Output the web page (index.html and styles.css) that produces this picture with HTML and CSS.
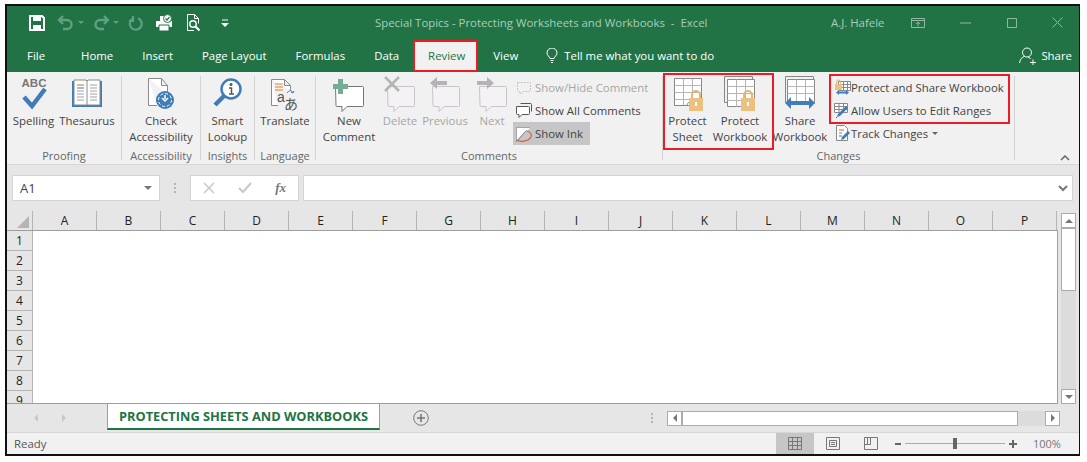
FILE: index.html
```html
<!DOCTYPE html>
<html lang="en">

<head>
    <meta charset="UTF-8">
    <title>Special Topics - Protecting Worksheets and Workbooks - Excel</title>
    <link rel="stylesheet" href="styles.css">
</head>

<body>
    <div class="window">
        <div class="title-bar">
            <div class="qat">
                <svg class="qat-save" width="16" height="16" viewBox="0 0 16 16"><path d="M1 1h12l2 2v12H1z" fill="none" stroke="#fff" stroke-width="2"/><path d="M4 1h8v5H4z" fill="#fff"/><path d="M4 10h8v5H4z" fill="#fff"/></svg>
                <svg class="qat-undo" width="18" height="16" viewBox="0 0 18 16"><path d="M6 1 2 5l4 4M2 5h8a4 4 0 0 1 0 9H6" fill="none" stroke="#5fa081" stroke-width="2.4"/></svg>
                <span class="qat-caret"></span>
                <svg class="qat-redo" width="18" height="16" viewBox="0 0 18 16"><path d="M12 1l4 4-4 4M16 5H8a4 4 0 0 0 0 9h4" fill="none" stroke="#5fa081" stroke-width="2.4"/></svg>
                <span class="qat-caret"></span>
                <svg class="qat-repeat" width="16" height="16" viewBox="0 0 16 16"><path d="M10 3.2a6 6 0 1 1-5 .2M5 1v5H1" fill="none" stroke="#5fa081" stroke-width="2.2"/></svg>
                <svg class="qat-print" width="18" height="18" viewBox="0 0 18 18"><path d="M5 2h5v5H5zM1 7h16v6H1z" fill="#fff"/><path d="M4 11h10v6H4z" fill="#fff" stroke="#217346"/><circle cx="12.5" cy="4.5" r="4" fill="#fff" stroke="#217346"/><path d="M10.5 4.5l1.5 1.500 2.500-3" fill="none" stroke="#217346" stroke-width="1.200"/></svg>
                <svg class="qat-preview" width="16" height="18" viewBox="0 0 16 18"><path d="M1.500.5h7l4 4v5M8 16.500H1.500V.5M8.500.5v4h4" fill="none" stroke="#fff"/><circle cx="7" cy="10" r="3.200" fill="none" stroke="#fff" stroke-width="1.400"/><path d="M9.500 12.500l4 4" stroke="#fff" stroke-width="2"/></svg>
                <svg class="qat-more" width="8" height="8" viewBox="0 0 8 8"><path d="M1 1h6" stroke="#fff"/><path d="M0 4h8L4 8z" fill="#fff"/></svg>
            </div>
            <div class="doc-title">Special Topics - Protecting Worksheets and Workbooks&nbsp; - &nbsp;Excel</div>
            <div class="user-name">A.J. Hafele</div>
            <div class="window-buttons">
                <svg width="14" height="10" viewBox="0 0 14 10"><path d="M.5.500h13v9H.500zM.5 2.500h13M7 8.500V4M5 6l2-2 2 2" fill="none" stroke="#8fb9a3"/></svg>
                <svg width="12" height="2" viewBox="0 0 12 2"><path d="M0 1h11" stroke="#8fb9a3"/></svg>
                <svg width="10" height="10" viewBox="0 0 10 10"><path d="M.5.500h9v9h-9z" fill="none" stroke="#8fb9a3"/></svg>
                <svg width="11" height="11" viewBox="0 0 11 11"><path d="M.5.500l10 10M10.500.500l-10 10" stroke="#8fb9a3"/></svg>
            </div>
        </div>

        <div class="tab-bar">
            <span class="tab tab-file">File</span>
            <span class="tab tab-home">Home</span>
            <span class="tab tab-insert">Insert</span>
            <span class="tab tab-layout">Page Layout</span>
            <span class="tab tab-formulas">Formulas</span>
            <span class="tab tab-data">Data</span>
            <span class="tab tab-review">Review</span>
            <span class="tab tab-view">View</span>
            <svg class="bulb" width="12" height="15" viewBox="0 0 12 15"><path d="M4 10.500C3.500 8.500 1 7.500 1 5a5 5 0 0 1 10 0c0 2.500-2.500 3.500-3 5.500zM4.500 12.500h3M5 14.500h2" fill="none" stroke="#fff"/></svg>
            <span class="tab tell-me">Tell me what you want to do</span>
            <svg class="share-icon" width="18" height="18" viewBox="0 0 18 18"><circle cx="8" cy="5.500" r="4.500" fill="none" stroke="#fff"/><path d="M.5 16c.5-3.500 2.500-6 5-6.500M9 10c1.200.3 2 1 2.700 2M11 15.500h6M14 12.500v6" fill="none" stroke="#fff"/></svg>
            <span class="tab tab-share">Share</span>
            <div class="red-box review-mark"></div>
        </div>

        <div class="ribbon">
            <div class="group proofing">
                <div class="group-body">
                    <div class="big-btn spelling-btn">
                        <svg class="big-icon" width="32" height="36" viewBox="0 0 32 36"><text x="16" y="11" text-anchor="middle" font-family="Liberation Sans, sans-serif" font-size="11.500" font-weight="700" fill="#777">ABC</text><path d="M6 21l8 9L27 13" fill="none" stroke="#3f7cb8" stroke-width="4.500"/></svg>
                        <span>Spelling</span>
                    </div>
                    <div class="big-btn thesaurus-btn">
                        <svg class="big-icon" width="32" height="36" viewBox="0 0 32 36"><path d="M1 5h30v26H1z" fill="#3f7cb8"/><path d="M3 4h12l1 1 1-1h12v25H3z" fill="#fff" stroke="#8a8a8a"/><path d="M16 5v24" stroke="#8a8a8a"/><path d="M6 9h7" stroke="#d2691e"/><path d="M6 12h7" stroke="#3f7cb8"/><path d="M6 15h7M6 18h7M6 21h7M6 24h7M19 9h7M19 12h7M19 15h7M19 18h7M19 21h7M19 24h7" stroke="#a0a0a0"/></svg>
                        <span>Thesaurus</span>
                    </div>
                </div>
                <div class="group-label">Proofing</div>
            </div>

            <div class="group accessibility">
                <div class="group-body">
                    <div class="big-btn">
                        <svg class="big-icon" width="32" height="36" viewBox="0 0 32 36"><path d="M3.500 2.500h13l6 7v9M12 29.500H3.500v-27M16.500 2.500v7h6" fill="#fff" stroke="#8a8a8a"/><circle cx="20" cy="24" r="9" fill="#3f7cb8"/><circle cx="20" cy="24" r="6.500" fill="none" stroke="#fff" stroke-dasharray="3 2"/><path d="M20 19v4M17 22l3 3 3-3" fill="none" stroke="#fff" stroke-width="1.500"/></svg>
                        <span>Check<br>Accessibility</span>
                    </div>
                </div>
                <div class="group-label">Accessibility</div>
            </div>

            <div class="group insights">
                <div class="group-body">
                    <div class="big-btn">
                        <svg class="big-icon" width="32" height="36" viewBox="0 0 32 36"><circle cx="19" cy="13" r="9.500" fill="#fff" stroke="#3f7cb8" stroke-width="2.500"/><path d="M12 20L3 29" stroke="#3f7cb8" stroke-width="4.500"/><circle cx="19" cy="8.500" r="1.500" fill="#555"/><path d="M17 12h2.500v6M17 18h5" fill="none" stroke="#555" stroke-width="1.500"/></svg>
                        <span>Smart<br>Lookup</span>
                    </div>
                </div>
                <div class="group-label">Insights</div>
            </div>

            <div class="group language">
                <div class="group-body">
                    <div class="big-btn">
                        <svg class="big-icon" width="32" height="36" viewBox="0 0 32 36"><path d="M2.500 3.500h13l6 6v5M9 29.500H2.500v-26M15.500 3.500v6h6" fill="#fff" stroke="#8a8a8a"/><path d="M6 8h8M6 11h8M6 14h8" stroke="#e2832e"/><path d="M18 17c2-3 5-3 6 0M24 17l-2-1M24 17l1-2" fill="none" stroke="#3f7cb8"/><text x="8" y="26" font-family="Liberation Sans, sans-serif" font-size="14" fill="#555">a</text><text x="15" y="33" font-family="Noto Sans CJK JP, sans-serif" font-size="14" fill="#555">あ</text></svg>
                        <span>Translate</span>
                    </div>
                </div>
                <div class="group-label">Language</div>
            </div>

            <div class="group comments">
                <div class="group-body">
                    <div class="big-btn new-comment">
                        <svg class="big-icon" width="34" height="36" viewBox="0 0 34 36"><path d="M3.500 10.500h27q1 0 1 1v18q0 1-1 1H15l-5 5v-5H5q-1 0-1-1z" fill="#fff" stroke="#777"/><path d="M6 3h5v5h5v5h-5v5H6v-5H1V8h5z" fill="#76ab96"/></svg>
                        <span>New<br>Comment</span>
                    </div>
                    <div class="big-btn off delete-btn">
                        <svg class="big-icon" width="32" height="36" viewBox="0 0 32 36"><path d="M3.500 10.500h26q1 0 1 1v18q0 1-1 1H15l-5 5v-5H5q-1 0-1-1z" fill="#f4f2f4" stroke="#c9c4c9"/><path d="M1 1l14 14M15 1L1 15" stroke="#b4b4b4" stroke-width="2.500"/></svg>
                        <span>Delete</span>
                    </div>
                    <div class="big-btn off previous-btn">
                        <svg class="big-icon" width="32" height="36" viewBox="0 0 32 36"><path d="M3.500 10.500h26q1 0 1 1v18q0 1-1 1H15l-5 5v-5H5q-1 0-1-1z" fill="#f4f2f4" stroke="#c9c4c9"/><path d="M8 1l-7 6 7 6V9h10V5H8z" fill="#b4b4b4"/></svg>
                        <span>Previous</span>
                    </div>
                    <div class="big-btn off next-btn">
                        <svg class="big-icon" width="32" height="36" viewBox="0 0 32 36"><path d="M3.500 10.500h26q1 0 1 1v18q0 1-1 1H15l-5 5v-5H5q-1 0-1-1z" fill="#f4f2f4" stroke="#c9c4c9"/><path d="M11 1l7 6-7 6V9H1V5h10z" fill="#b4b4b4"/></svg>
                        <span>Next</span>
                    </div>
                    <div class="small-stack">
                        <div class="small-btn off">
                            <svg width="16" height="16" viewBox="0 0 16 16"><path d="M1.500 2.500h12q1 0 1 1v7q0 1-1 1H7l-3 3v-3H2.500q-1 0-1-1z" fill="none" stroke="#c4c4c4" stroke-dasharray="2 1"/></svg>
                            <span>Show/Hide Comment</span>
                        </div>
                        <div class="small-btn">
                            <svg width="16" height="16" viewBox="0 0 16 16"><path d="M4.500.5h10q1 0 1 1v7" fill="none" stroke="#555"/><path d="M.5 3.500h12q1 0 1 1v6q0 1-1 1H6l-3 3v-3H1.500q-1 0-1-1z" fill="#fff" stroke="#555"/></svg>
                            <span>Show All Comments</span>
                        </div>
                        <div class="small-btn ink-on">
                            <svg width="16" height="16" viewBox="0 0 16 16"><path d="M.5 15.500V1.500h14" fill="#fff" stroke="#666" stroke-dasharray="1 1"/><path d="M.5 15.500l10-11" stroke="#666"/><path d="M1 14c3 2 11 2 14-3 1-3-1-5-4-6" fill="none" stroke="#d9583b" stroke-width="1.200"/></svg>
                            <span>Show Ink</span>
                        </div>
                    </div>
                </div>
                <div class="group-label">Comments</div>
            </div>

            <div class="group changes">
                <div class="group-body">
                    <div class="big-btn protect-sheet">
                        <svg class="big-icon" width="32" height="36" viewBox="0 0 32 36"><path d="M2.500 2.500h27v27h-27z" fill="#fff" stroke="#888"/><path d="M2.500 9.500h27M2.500 16.500h27M2.500 23.500h27M11.500 2.500v27M20.500 2.500v27" stroke="#b5b5b5"/><path d="M2.500 29.500h12l2-3h6" fill="none" stroke="#888"/><path d="M23 22v-3a4 4 0 0 1 8 0v3" transform="translate(-3 0)" fill="none" stroke="#e3b873" stroke-width="2"/><path d="M17 22h14v13H17z" fill="#ecc17f"/><path d="M24 26v4" stroke="#fff" stroke-width="2"/></svg>
                        <span>Protect<br>Sheet</span>
                    </div>
                    <div class="big-btn protect-book">
                        <svg class="big-icon" width="32" height="36" viewBox="0 0 32 36"><path d="M.5.500h28v4M.5.500v26h3" fill="none" stroke="#888"/><path d="M3.500 3.500h27v27h-27z" fill="#fff" stroke="#888"/><path d="M3.500 10.500h27M3.500 17.500h27M3.500 24.500h27M12.500 3.500v27M21.500 3.500v27" stroke="#b5b5b5"/><path d="M23 22v-3a4 4 0 0 1 8 0v3" transform="translate(-3 0)" fill="none" stroke="#e3b873" stroke-width="2"/><path d="M17 22h14v13H17z" fill="#ecc17f"/><path d="M24 26v4" stroke="#fff" stroke-width="2"/></svg>
                        <span>Protect<br>Workbook</span>
                    </div>
                    <div class="big-btn share-book">
                        <svg class="big-icon" width="34" height="36" viewBox="0 0 34 36"><path d="M2.500.5h28v4M2.500.5v26h3" fill="none" stroke="#888"/><path d="M4.500 3.500h27v24h-27z" fill="#fff" stroke="#888"/><path d="M4.500 10.500h27M4.500 17.500h27M13.500 3.500v24M22.500 3.500v24" stroke="#b5b5b5"/><path d="M2 27l6-6v4h18v-4l6 6-6 6v-4H8v4z" fill="#3f7cb8"/></svg>
                        <span>Share<br>Workbook</span>
                    </div>
                    <div class="small-stack change-stack">
                        <div class="small-btn">
                            <svg width="17" height="17" viewBox="0 0 17 17"><path d="M4.500 2.500h12v9h-12zM4.500 5.500h12M4.500 8.500h12M9.500 2.500v9M13.500 2.500v9" fill="#fff" stroke="#888"/><path d="M1 5h7v6H1z" fill="#ecc17f"/><path d="M2.500 5V3a2 2 0 0 1 4 0v2" fill="none" stroke="#e3b873"/><path d="M2 13.500l3-2.500v1.500h7V11l3 2.500-3 2.500v-1.500H5V16z" fill="#3f7cb8"/></svg>
                            <span>Protect and Share Workbook</span>
                        </div>
                        <div class="small-btn">
                            <svg width="17" height="17" viewBox="0 0 17 17"><path d="M.5 1.500h13v9H.500zM.5 4.500h13M.5 7.500h13M5 1.500v9M9.500 1.500v9" fill="#fff" stroke="#888"/><path d="M3 15l1-3 8-8 2 2-8 8z" fill="#3f7cb8"/><path d="M2 16l1-1" stroke="#555"/></svg>
                            <span>Allow Users to Edit Ranges</span>
                        </div>
                        <div class="small-btn">
                            <svg width="17" height="17" viewBox="0 0 17 17"><path d="M2.500.5h8l3 3v12h-11z" fill="#fff" stroke="#888"/><path d="M5 5h5M5 8h3" stroke="#d2691e"/><path d="M5 11h3" stroke="#3f7cb8"/><path d="M7 15l1-3 6-6 2 2-6 6z" fill="#3f7cb8"/></svg>
                            <span>Track Changes</span>
                            <span class="mini-caret"></span>
                        </div>
                    </div>
                </div>
                <div class="group-label">Changes</div>
                <div class="red-box protect-mark"></div>
                <div class="red-box share-mark"></div>
            </div>

            <svg class="collapse" width="10" height="6" viewBox="0 0 10 6"><path d="M1 5l4-4 4 4" fill="none" stroke="#666" stroke-width="1.500"/></svg>
        </div>

        <div class="formula-bar">
            <div class="name-box">
                <span>A1</span>
                <span class="name-caret"></span>
            </div>
            <div class="grip"></div>
            <div class="fx-box">
                <svg width="12" height="12" viewBox="0 0 12 12"><path d="M1 1l10 10M11 1L1 11" stroke="#c8c8c8" stroke-width="1.500"/></svg>
                <svg width="14" height="12" viewBox="0 0 14 12"><path d="M1 6l4 4 8-9" fill="none" stroke="#c8c8c8" stroke-width="2"/></svg>
                <span class="fx">fx</span>
            </div>
            <div class="formula-input">
                <svg width="10" height="7" viewBox="0 0 10 7"><path d="M1 1l4 4 4-4" fill="none" stroke="#777" stroke-width="2"/></svg>
            </div>
        </div>

        <div class="sheet-area">
            <div class="sheet">
                <div class="col-heads">
                    <div class="corner"><span class="corner-mark"></span></div>
                    <div class="col-head">A</div>
                    <div class="col-head">B</div>
                    <div class="col-head">C</div>
                    <div class="col-head">D</div>
                    <div class="col-head">E</div>
                    <div class="col-head">F</div>
                    <div class="col-head">G</div>
                    <div class="col-head">H</div>
                    <div class="col-head">I</div>
                    <div class="col-head">J</div>
                    <div class="col-head">K</div>
                    <div class="col-head">L</div>
                    <div class="col-head">M</div>
                    <div class="col-head">N</div>
                    <div class="col-head">O</div>
                    <div class="col-head">P</div>
                </div>
                <div class="grid-wrap">
                    <div class="row-heads">
                        <div class="row-head">1</div>
                        <div class="row-head">2</div>
                        <div class="row-head">3</div>
                        <div class="row-head">4</div>
                        <div class="row-head">5</div>
                        <div class="row-head">6</div>
                        <div class="row-head">7</div>
                        <div class="row-head">8</div>
                        <div class="row-head">9</div>
                    </div>
                    <div class="cells"></div>
                </div>
            </div>
            <div class="v-scroll">
                <div class="scroll-btn"><span class="arrow-up"></span></div>
                <div class="v-thumb"></div>
                <div class="v-track"></div>
                <div class="scroll-btn"><span class="arrow-down"></span></div>
            </div>
        </div>

        <div class="sheet-tabs">
            <div class="tab-nav">
                <span class="arrow-left pale"></span>
                <span class="arrow-right pale"></span>
            </div>
            <div class="sheet-tab">PROTECTING SHEETS AND WORKBOOKS</div>
            <svg class="add-sheet" width="16" height="16" viewBox="0 0 16 16"><circle cx="8" cy="8" r="7.300" fill="none" stroke="#777"/><path d="M8 4v8M4 8h8" stroke="#777" stroke-width="1.600"/></svg>
            <div class="grip tab-grip"></div>
            <div class="h-scroll">
                <div class="scroll-btn"><span class="arrow-left"></span></div>
                <div class="h-thumb"></div>
                <div class="h-track"></div>
                <div class="scroll-btn"><span class="arrow-right"></span></div>
            </div>
        </div>

        <div class="status-bar">
            <span class="ready">Ready</span>
            <div class="view-btn view-on">
                <svg width="14" height="13" viewBox="0 0 14 13"><path d="M.5.500h13v12H.500zM.5 4.500h13M.5 8.500h13M4.500.500v12M9.500.500v12" fill="none" stroke="#777"/></svg>
            </div>
            <div class="view-btn">
                <svg width="14" height="13" viewBox="0 0 14 13"><path d="M.5.500h13v12H.500zM3.500 3.500h7v6h-7zM5 5.500h4M5 7.500h4" fill="none" stroke="#777"/></svg>
            </div>
            <div class="view-btn">
                <svg width="14" height="13" viewBox="0 0 14 13"><path d="M.5.500h13v12H.500zM.5 7.500h6M6.500.500v7M3.500.500v7" fill="none" stroke="#777"/></svg>
            </div>
            <div class="zoom-minus"></div>
            <div class="zoom-slider"><span class="zoom-thumb"></span></div>
            <div class="zoom-plus"></div>
            <span class="zoom-level">100%</span>
        </div>
    </div>
</body>

</html>
```

FILE: styles.css
```css
* {
    box-sizing: border-box;
}

body {
    margin: 0;
    background-color: #fff;
    font-family: "Open Sans", "Noto Sans", sans-serif;
    font-size: 11.4px;
    color: #444;
}

.window {
    width: 1075px;
    height: 452px;
    margin: 4px 0 0 5px;
    border-style: solid;
    border-color: #111;
    border-width: 2px 1px 2px 2px;
    background-color: #e6e6e6;
}

.red-box {
    position: absolute;
    border: 2px solid #ed1c24;
}

/* title bar */
.title-bar {
    position: relative;
    display: flex;
    align-items: center;
    height: 33px;
    background-color: #217346;
    color: #a9cdb9;
}

.qat {
    display: flex;
    align-items: center;
    padding-left: 22px;
    width: 368px;
}

.qat-undo {
    margin-left: 12px;
}

.qat-caret {
    width: 0;
    height: 0;
    margin: 0 8px 0 3px;
    border: 3px solid transparent;
    border-top: 3px solid #5fa081;
    border-bottom: 0;
}

.qat-repeat {
    margin-left: 1px;
}

.qat-print {
    margin-left: 11px;
}

.qat-preview {
    margin-left: 13px;
}

.qat-more {
    margin-left: 19px;
}

.doc-title {
    width: 456px;
}

.user-name {
    width: 80px;
}

.window-buttons {
    display: flex;
    align-items: center;
    gap: 35px;
}

/* tabs */
.tab-bar {
    position: relative;
    display: flex;
    align-items: center;
    height: 33px;
    background-color: #217346;
    color: #fff;
}

.tab {
    white-space: nowrap;
}

.tab-file {
    margin-left: 20px;
}

.tab-home {
    margin-left: 36px;
}

.tab-insert,
.tab-layout,
.tab-formulas,
.tab-data {
    margin-left: 29px;
}

.tab-view {
    margin-left: 28px;
}

.tab-review {
    position: relative;
    margin-left: 29px;
    color: #217346;
    z-index: 1;
}

.review-mark {
    left: 406px;
    top: 1px;
    width: 65px;
    height: 32px;
    background-color: #f1f1f1;
}

.bulb {
    margin-left: 28px;
}

.tell-me {
    margin-left: 6px;
}

.share-icon {
    margin-left: auto;
}

.tab-share {
    margin-left: 4px;
    margin-right: 7px;
}

/* ribbon */
.ribbon {
    display: flex;
    height: 93px;
    padding-top: 4px;
    background-color: #f1f1f1;
    border-bottom: 1px solid #d6d6d6;
}

.group {
    display: flex;
    flex-direction: column;
    flex: none;
    height: 84px;
    border-right: 1px solid #d4d4d4;
}

.proofing {
    width: 115px;
}

.accessibility {
    width: 79px;
}

.insights {
    width: 54px;
}

.language {
    width: 61px;
}

.comments {
    width: 347px;
}

.changes {
    position: relative;
    width: 352px;
}

.group-body {
    display: flex;
    justify-content: center;
    height: 73px;
}

.proofing .group-body,
.comments .group-body,
.changes .group-body {
    justify-content: flex-start;
}

.group-label {
    height: 11px;
    line-height: 14px;
    font-size: 11px;
    text-align: center;
    color: #666;
}

.big-btn {
    display: flex;
    flex-direction: column;
    align-items: center;
    flex: none;
    line-height: 16px;
    text-align: center;
    white-space: nowrap;
}

.big-icon {
    flex: none;
    margin-bottom: 1px;
}

.off {
    color: #a6a6a6;
}

.spelling-btn {
    width: 53px;
}

.thesaurus-btn {
    width: 54px;
}

.new-comment {
    width: 66px;
}

.delete-btn {
    width: 36px;
}

.previous-btn {
    width: 54px;
}

.next-btn {
    width: 40px;
}

.small-stack {
    display: flex;
    flex-direction: column;
    align-items: flex-start;
    flex: none;
    margin-left: 1px;
}

.small-btn {
    display: flex;
    align-items: center;
    gap: 3px;
    height: 23px;
    padding: 0 7px 0 3px;
    white-space: nowrap;
}

.ink-on {
    background-color: #c6c6c6;
}

.protect-sheet {
    width: 49px;
}

.protect-book {
    width: 56px;
}

.share-book {
    width: 56px;
    margin-left: 4px;
}

.change-stack {
    margin-left: 3px;
}

.change-stack .small-btn {
    gap: 0;
}

.mini-caret {
    width: 0;
    height: 0;
    margin-left: 4px;
    border: 3px solid transparent;
    border-top: 3px solid #666;
    border-bottom: 0;
}

.protect-mark {
    left: 0;
    top: -3px;
    width: 111px;
    height: 77px;
}

.share-mark {
    left: 166px;
    top: -2px;
    width: 181px;
    height: 50px;
}

.collapse {
    align-self: flex-end;
    margin: 0 0 3px 45px;
}

/* formula bar */
.formula-bar {
    display: flex;
    align-items: center;
    height: 46px;
    padding: 10px 6px 10px 5px;
}

.name-box {
    display: flex;
    align-items: center;
    justify-content: space-between;
    width: 148px;
    height: 26px;
    padding: 0 7px;
    font-size: 13px;
    background-color: #fff;
    border: 1px solid #d4d4d4;
}

.name-caret {
    width: 0;
    height: 0;
    border: 4px solid transparent;
    border-top: 4px solid #777;
    border-bottom: 0;
}

.grip {
    width: 2px;
    height: 10px;
    margin: 0 14px;
    background: repeating-linear-gradient(#b5b5b5 0 2px, transparent 2px 4px);
}

.fx-box {
    display: flex;
    align-items: center;
    justify-content: space-between;
    width: 109px;
    height: 26px;
    padding: 0 12px;
    background-color: #fff;
    border: 1px solid #d4d4d4;
}

.fx {
    font-family: "Liberation Serif", serif;
    font-style: italic;
    font-weight: 700;
    font-size: 13px;
    color: #777;
}

.formula-input {
    display: flex;
    align-items: center;
    justify-content: flex-end;
    flex: 1;
    height: 26px;
    margin-left: 4px;
    padding-right: 4px;
    background-color: #fff;
    border: 1px solid #d4d4d4;
}

/* sheet */
.sheet-area {
    display: flex;
    height: 193px;
}

.sheet {
    width: 1051px;
}

.col-heads {
    display: grid;
    grid-template-columns: 26px repeat(16, 64px);
    height: 20px;
    border-bottom: 1px solid #9e9e9e;
}

.corner {
    position: relative;
    border-right: 1px solid #b5b5b5;
}

.corner-mark {
    position: absolute;
    right: 3px;
    bottom: 2px;
    width: 0;
    height: 0;
    border-left: 12px solid transparent;
    border-bottom: 12px solid #b5b5b5;
}

.col-head {
    line-height: 19px;
    font-size: 12px;
    text-align: center;
    color: #222;
    border-right: 1px solid #b5b5b5;
}

.grid-wrap {
    display: flex;
    height: 173px;
    overflow: hidden;
    border-bottom: 1px solid #9e9e9e;
}

.row-heads {
    width: 26px;
    flex: none;
}

.row-head {
    height: 20px;
    line-height: 20px;
    font-size: 12px;
    text-align: center;
    color: #222;
    border-right: 1px solid #b5b5b5;
    border-bottom: 1px solid #b5b5b5;
}

.cells {
    flex: 1;
    background-color: #fff;
    border-right: 1px solid #9e9e9e;
}

.v-scroll {
    display: flex;
    flex-direction: column;
    width: 15px;
    margin: 2px 0 0 3px;
}

.scroll-btn {
    display: flex;
    align-items: center;
    justify-content: center;
    flex: none;
    width: 15px;
    height: 15px;
    background-color: #fff;
    border: 1px solid #ababab;
}

.v-thumb {
    height: 63px;
    background-color: #fff;
    border: 1px solid #ababab;
}

.v-track {
    flex: 1;
    background-color: #dcdcdc;
}

.arrow-up,
.arrow-down,
.arrow-left,
.arrow-right {
    width: 0;
    height: 0;
    border: 4px solid transparent;
}

.arrow-up {
    border-top: 0;
    border-bottom: 4px solid #777;
}

.arrow-down {
    border-bottom: 0;
    border-top: 4px solid #777;
}

.arrow-left {
    border-left: 0;
    border-right: 4px solid #777;
}

.arrow-right {
    border-right: 0;
    border-left: 4px solid #777;
}

.arrow-left.pale {
    border-right-color: #c8c8c8;
}

.arrow-right.pale {
    border-left-color: #c8c8c8;
}

/* sheet tabs */
.sheet-tabs {
    display: flex;
    align-items: center;
    height: 28px;
}

.tab-nav {
    display: flex;
    align-items: center;
    justify-content: space-between;
    width: 100px;
    padding: 0 41px 0 27px;
}

.sheet-tab {
    align-self: flex-start;
    width: 273px;
    height: 26px;
    line-height: 25px;
    text-align: center;
    font-weight: 700;
    font-size: 12.8px;
    color: #217346;
    white-space: nowrap;
    background-color: #fff;
    border: 1px solid #9e9e9e;
    border-top: 0;
    border-bottom: 2px solid #217346;
}

.add-sheet {
    margin-left: 33px;
}

.tab-grip {
    margin: 0 14px 0 222px;
}

.h-scroll {
    display: flex;
    align-items: center;
    width: 393px;
}

.h-thumb {
    width: 336px;
    height: 15px;
    background-color: #fff;
    border: 1px solid #ababab;
}

.h-track {
    width: 27px;
    height: 15px;
    background-color: #dcdcdc;
}

/* status bar */
.status-bar {
    display: flex;
    align-items: center;
    height: 22px;
    background-color: #f1f1f1;
    color: #555;
    border-top: 1px solid #d6d6d6;
}

.ready {
    width: 769px;
    padding-left: 7px;
}

.view-btn {
    display: flex;
    align-items: center;
    justify-content: center;
    width: 38px;
    height: 21px;
}

.view-on {
    background-color: #c6c6c6;
}

.zoom-minus {
    width: 6px;
    height: 2px;
    margin-left: 5px;
    background-color: #666;
}

.zoom-slider {
    position: relative;
    width: 100px;
    height: 1px;
    margin: 0 4px;
    background-color: #aaa;
}

.zoom-thumb {
    position: absolute;
    left: 48px;
    top: -5px;
    width: 4px;
    height: 11px;
    background-color: #666;
}

.zoom-plus {
    width: 8px;
    height: 8px;
    background:
        linear-gradient(#666, #666) center / 8px 2px no-repeat,
        linear-gradient(#666, #666) center / 2px 8px no-repeat;
}

.zoom-level {
    margin-left: 16px;
    font-size: 11px;
    color: #777;
}
```
